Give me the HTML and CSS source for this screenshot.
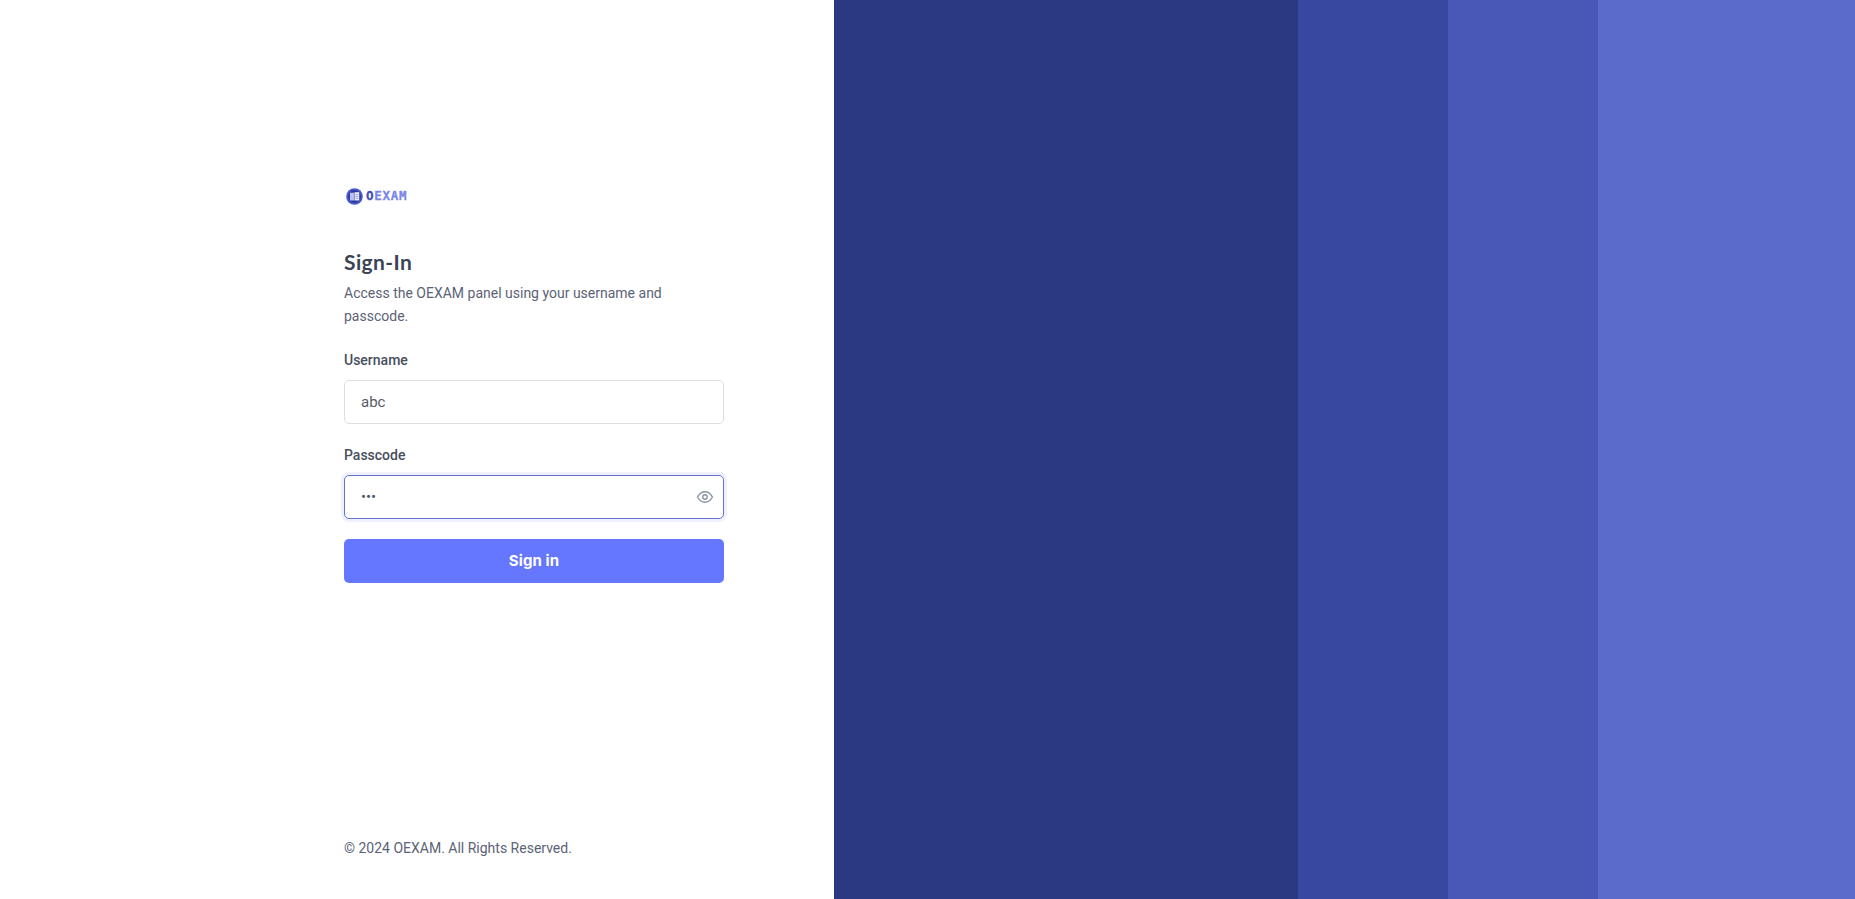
FILE: index.html
```html
<!DOCTYPE html>
<html lang="en">
<head>
<meta charset="utf-8">
<title>Sign-In | OEXAM</title>
<link rel="stylesheet" href="styles.css">
</head>
<body>
<div class="split">
  <main class="panel">
    <div class="block">
      <a class="logo" href="#">
        <svg class="logo-mark" width="17" height="17" viewBox="0 0 18 18" aria-hidden="true">
          <circle cx="9" cy="9" r="8.800" fill="#4a5acb"/>
          <circle cx="9" cy="9" r="6.800" fill="#2f3a9c"/>
          <path d="M4.200 5h4.300v8.200H4.200z" fill="#b8c0f0"/>
          <path d="M9 4.500h5v8.700H9z" fill="#eef0fc"/>
          <path d="M10 7h3M10 9h3M10 11h3" stroke="#7a86dc" stroke-width=".8"/>
        </svg>
        <span class="logo-text"><span class="logo-o">O</span>EXAM</span>
      </a>
      <h1 class="title">Sign-In</h1>
      <p class="lead">Access the OEXAM panel using your username and passcode.</p>
      <form class="form">
        <div class="field">
          <label class="label" for="username">Username</label>
          <input class="input" id="username" type="text" value="abc">
        </div>
        <div class="field">
          <label class="label" for="passcode">Passcode</label>
          <div class="input-wrap">
            <input class="input input-focus" id="passcode" type="password" value="abc">
            <svg class="eye" width="18" height="18" viewBox="0 0 24 24" fill="none" stroke="#8a93a3" stroke-width="1.800" aria-hidden="true">
              <path d="M2 12c2.600-4.600 6-7 10-7s7.400 2.400 10 7c-2.600 4.600-6 7-10 7s-7.400-2.400-10-7z"/>
              <circle cx="12" cy="12" r="3"/>
            </svg>
          </div>
        </div>
        <button class="btn" type="button">Sign in</button>
      </form>
    </div>
    <footer class="foot">© 2024 OEXAM. All Rights Reserved.</footer>
  </main>
  <aside class="art">
    <div class="stripe s1"></div>
    <div class="stripe s2"></div>
    <div class="stripe s3"></div>
    <div class="stripe s4"></div>
  </aside>
</div>
</body>
</html>
```
FILE: styles.css
```css
* { box-sizing: border-box; }
html, body { margin: 0; height: 100%; }
body {
  background: #fff;
  font-family: Roboto, "Liberation Sans", sans-serif;
  font-size: 14px;
  line-height: 23px;
  color: #5b6376;
  overflow: hidden;
}
.split { display: flex; height: 899px; }
.panel {
  width: 834px;
  flex: none;
  padding: 0 110px 0 344px;
  display: flex;
  flex-direction: column;
  justify-content: space-between;
}
.block { padding-top: 185px; }
.logo { display: flex; align-items: center; gap: 3px; height: 22px; padding: 1px 0 0 2px; text-decoration: none; }
.logo-mark { display: block; }
.logo-text {
  font-family: "DejaVu Sans Mono", monospace;
  font-weight: 700;
  font-size: 12.5px;
  line-height: 1;
  letter-spacing: 0.7px;
  color: #7b86e8;
  -webkit-text-stroke: 0.3px currentColor;
}
.logo-o { color: #3f4fb4; }
.title {
  margin: 42px 0 0;
  font-family: Lato, sans-serif;
  font-size: 21px;
  font-weight: 700;
  line-height: 26px;
  letter-spacing: 0.4px;
  color: #3b4356;
}
.lead { margin: 7px 0 0; }
.form { margin-top: 21px; }
.field { margin-bottom: 20px; }
.label {
  display: block;
  font-weight: 500;
  font-size: 14px;
  line-height: 22px;
  margin-bottom: 9px;
  color: #474e5e;
}
.input-wrap { position: relative; }
.input {
  display: block;
  width: 100%;
  height: 44px;
  padding: 0 40px 0 16px;
  border: 1px solid #dcdee3;
  border-radius: 5px;
  background: #fff;
  font: 400 15px Roboto, sans-serif;
  color: #545b69;
  outline: none;
}
.input-focus {
  border-color: #6472d8;
  box-shadow: 0 0 0 3px rgba(101, 118, 255, 0.1);
}
.eye { position: absolute; right: 10px; top: 13px; }
.btn {
  display: block;
  width: 100%;
  height: 44px;
  border: 0;
  border-radius: 5px;
  background: #6576ff;
  color: #fff;
  font-family: Inter, sans-serif;
  font-size: 15px;
  font-weight: 700;
  letter-spacing: 0.1px;
  padding: 0 0 1px;
  cursor: pointer;
}
.foot { padding-bottom: 39px; color: #5b6376; }
.art { flex: 1; display: flex; background: #2b3882; }
.stripe { flex: none; }
.s1 { width: 464px; background: #2b3882; }
.s2 { width: 150px; background: #3847a0; }
.s3 { width: 150px; background: #4958b7; }
.s4 { flex: 1; background: #5b6bcb; }
```
